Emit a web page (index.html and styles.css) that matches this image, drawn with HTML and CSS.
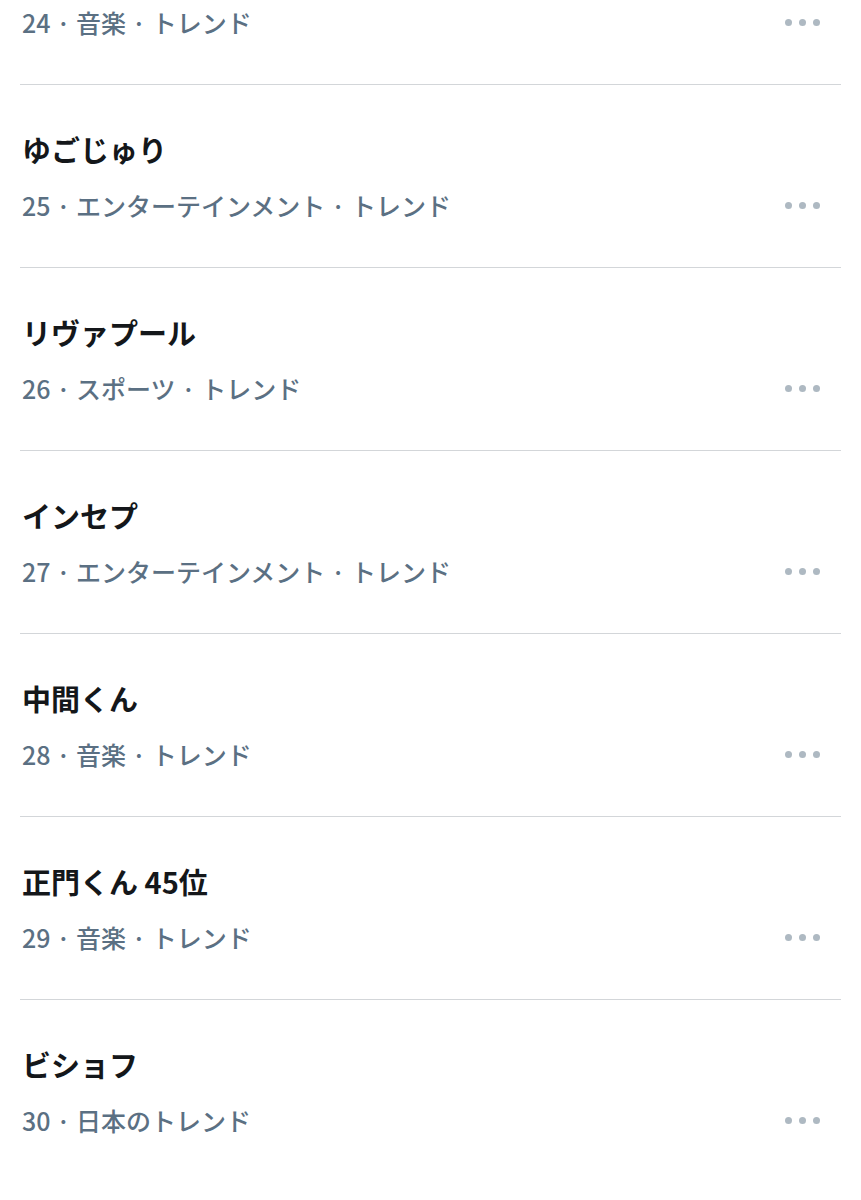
FILE: index.html
```html
<!DOCTYPE html>
<html lang="ja">
<head>
  <meta charset="UTF-8" />
  <meta name="viewport" content="width=device-width, initial-scale=1" />
  <title>トレンド</title>
  <link rel="stylesheet" href="styles.css">
</head>
<body>

  <ul class="trends">
    <li class="trend first">
      <div class="info">
        <div class="meta">24 · 音楽 · トレンド</div>
      </div>
      <span class="more"><i></i><i></i><i></i></span>
    </li>
    <li class="trend">
      <div class="info">
        <div class="name">ゆごじゅり</div>
        <div class="meta">25 · エンターテインメント · トレンド</div>
      </div>
      <span class="more"><i></i><i></i><i></i></span>
    </li>
    <li class="trend">
      <div class="info">
        <div class="name">リヴァプール</div>
        <div class="meta">26 · スポーツ · トレンド</div>
      </div>
      <span class="more"><i></i><i></i><i></i></span>
    </li>
    <li class="trend">
      <div class="info">
        <div class="name">インセプ</div>
        <div class="meta">27 · エンターテインメント · トレンド</div>
      </div>
      <span class="more"><i></i><i></i><i></i></span>
    </li>
    <li class="trend">
      <div class="info">
        <div class="name">中間くん</div>
        <div class="meta">28 · 音楽 · トレンド</div>
      </div>
      <span class="more"><i></i><i></i><i></i></span>
    </li>
    <li class="trend">
      <div class="info">
        <div class="name">正門くん 45位</div>
        <div class="meta">29 · 音楽 · トレンド</div>
      </div>
      <span class="more"><i></i><i></i><i></i></span>
    </li>
    <li class="trend last">
      <div class="info">
        <div class="name">ビショフ</div>
        <div class="meta">30 · 日本のトレンド</div>
      </div>
      <span class="more"><i></i><i></i><i></i></span>
    </li>
  </ul>

</body>
</html>
```

FILE: styles.css
```css
body {
  margin: 0;
  background: #fff;
  font-family: "Noto Sans CJK JP", "Noto Sans", sans-serif;
  overflow: hidden;
}
.trends {
  list-style: none;
  margin: 0 20px;
  padding: 0;
}
.trend {
  display: flex;
  align-items: flex-end;
  padding: 43px 21px 45px 2px;
  border-bottom: 1px solid #d3d6d9;
}
.trend.first {
  padding-top: 5px;
}
.trend.last {
  border-bottom: none;
}
.info {
  flex: 1;
  display: flex;
  flex-direction: column;
  gap: 18px;
}
.name {
  font-size: 29px;
  line-height: 42px;
  font-weight: 700;
  color: #14171a;
}
.meta {
  font-size: 25px;
  line-height: 34px;
  font-weight: 500;
  color: #5b7083;
}
.more {
  display: flex;
  gap: 7px;
  height: 34px;
  align-items: center;
}
.more i {
  width: 7px;
  height: 7px;
  border-radius: 50%;
  background: #aeb9c2;
}
```
